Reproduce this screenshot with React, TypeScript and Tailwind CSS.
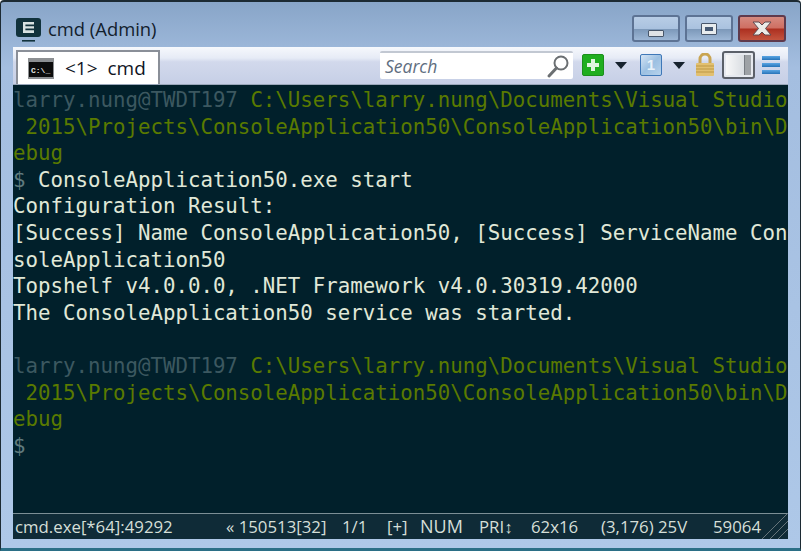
import React from 'react'

const mono = "font-['DejaVu_Sans_Mono','Liberation_Mono',monospace]"

function Host() {
  return <span className="text-[#3c5860]">larry.nung@TWDT197</span>
}

function Green({ children }: { children: React.ReactNode }) {
  return <span className="text-[#5a7a00]">{children}</span>
}

function PromptBlock() {
  return (
    <>
      <div className="h-[26.6px]"><Host /> <Green>C:\Users\larry.nung\Documents\Visual Studio</Green></div>
      <div className="h-[26.6px]"><Green> 2015\Projects\ConsoleApplication50\ConsoleApplication50\bin\D</Green></div>
      <div className="h-[26.6px]"><Green>ebug</Green></div>
    </>
  )
}

function WinButton({ width, red, children }: { width: string; red?: boolean; children: React.ReactNode }) {
  return (
    <div
      className={`${width} h-[27px] flex items-center justify-center rounded-[3px] border-2 ${
        red
          ? 'border-[#5f3a4c] bg-[linear-gradient(#d58a80_0%,#cf6f62_48%,#ac2f20_52%,#c4553f_100%)]'
          : 'border-[#5d7394] bg-[linear-gradient(#b8cde6_0%,#aac2df_50%,#7d99ba_54%,#9db7d6_100%)]'
      }`}
    >
      {children}
    </div>
  )
}

function Arrow() {
  return (
    <svg width="12" height="7" viewBox="0 0 12 7">
      <path d="M0 0h12L6 7z" fill="#16222e" />
    </svg>
  )
}

export default function App() {
  return (
    <div className="w-[801px] h-[551px] flex flex-col overflow-hidden rounded-t-[4px] border border-[#1c2a33] border-t-2 border-b-[3px] border-b-[#2b6f86] bg-[linear-gradient(#88a5c8_0%,#a4bee0_12%,#aec8e8_100%)] px-[12px] font-['Liberation_Sans',sans-serif]">
      {/* Title bar */}
      <div className="h-[45px] shrink-0 flex items-start justify-between">
        <div className="flex items-center pt-[15px] pl-[3px]">
          <svg width="26" height="26" viewBox="0 0 26 26">
            <rect x="0" y="1" width="25" height="19" rx="3" fill="#11323c" />
            <path d="M7 5h11v2.4H9.4v1.8H18v2.2H9.4v1.8H18V16H7z" fill="#d8e2e2" />
            <rect x="6" y="23" width="13" height="1.6" fill="#11323c" />
          </svg>
          <span className="ml-[6px] -mt-[2px] text-[18.400px] font-['Open_Sans',sans-serif] text-[#12202c]">cmd (Admin)</span>
        </div>
        <div className="flex gap-[5px] pt-[13px] pr-[2px]">
          <WinButton width="w-[48px]">
            <div className="w-[16px] h-[7px] mt-[9px] rounded-[1px] border border-[#48566a] bg-[#dfe2e6]" />
          </WinButton>
          <WinButton width="w-[48px]">
            <div className="w-[16px] h-[12px] flex items-center justify-center rounded-[1px] border border-[#48566a] bg-[#e8ecee]">
              <div className="w-[8px] h-[4px] bg-[#475a74]" />
            </div>
          </WinButton>
          <WinButton width="w-[48px]" red>
            <svg width="22" height="15" viewBox="0 0 22 15">
              <path d="M2 1h6l3 3 3-3h6l-5.500 6.500L20 14h-6l-3-3-3 3H2l5.500-6.500z" fill="#ecebe8" stroke="#5e4a50" strokeWidth="1" />
            </svg>
          </WinButton>
        </div>
      </div>

      {/* Tab + toolbar */}
      <div className="h-[38px] shrink-0 flex items-end bg-[linear-gradient(#f6f8fc_0%,#e6ebf6_30%,#d2d9ec_40%,#c6cfe6_100%)] border-b border-[#9aa7ba]">
        <div className="ml-[3px] w-[144px] h-[34px] flex items-center bg-white border-2 border-b-0 border-[#8a8f98] pl-[10px]">
          <svg width="26" height="21" viewBox="0 0 26 21">
            <rect width="26" height="21" fill="#8c8f92" />
            <rect x="1" y="4" width="24" height="15" fill="#0c0c0c" />
            <text x="3" y="15" fontSize="8" fontWeight="700" fill="#e8e8e8" fontFamily="Liberation Mono">C:\_</text>
          </svg>
          <span className="ml-[11px] text-[19px] font-['Open_Sans',sans-serif] text-[#10151f] whitespace-pre">{'<1>  cmd'}</span>
        </div>
        <div className="ml-[220px] mb-[5px] w-[193px] h-[28px] flex items-center justify-between bg-white border-t-2 border-[#c2c8d2] rounded-[2px] pl-[5px] pr-[3px]">
          <span className="italic text-[17.500px] font-['Open_Sans',sans-serif] text-[#5f6e80]">Search</span>
          <svg width="24" height="26" viewBox="0 0 24 26">
            <circle cx="15" cy="10" r="6.500" fill="none" stroke="#6b6f72" strokeWidth="2" />
            <path d="M10.500 15L3 23" stroke="#6b6f72" strokeWidth="3" strokeLinecap="round" />
          </svg>
        </div>
        <div className="flex items-center ml-[9px] mb-[7px] h-[24px]">
          <div className="w-[22px] h-[22px] flex items-center justify-center rounded-[2px] bg-[#1fae1f] border border-[#1b8f1b]">
            <svg width="14" height="14" viewBox="0 0 14 14">
              <path d="M5 1h4v4h4v4H9v4H5V9H1V5h4z" fill="#dff5df" />
            </svg>
          </div>
          <div className="ml-[11px]"><Arrow /></div>
          <div className="ml-[13px] w-[22px] h-[22px] flex items-center justify-center rounded-[2px] border border-[#3f78b8] bg-[linear-gradient(135deg,#d5e4f4_0%,#9cc0e2_50%,#b7d2ec_100%)] text-[15px] font-bold text-[#e8f2fa]">1</div>
          <div className="ml-[11px]"><Arrow /></div>
          <svg className="ml-[10px]" width="20" height="24" viewBox="0 0 20 24">
            <path d="M5 11V6a5 5 0 0 1 10 0v5" fill="none" stroke="#c9a552" strokeWidth="3" />
            <rect x="1" y="10" width="18" height="13" rx="1" fill="#e2c070" />
            <path d="M1 13h18M1 16h18M1 19h18" stroke="#bd9845" strokeWidth="1" />
          </svg>
          <div className="ml-[7px] w-[33px] h-[28px] flex rounded-[3px] border-2 border-[#5b6069] bg-[#e6e9ef] p-[2px]">
            <div className="flex-1 bg-[linear-gradient(90deg,#f8f8f8,#d9dde2)]" />
            <div className="w-[7px] bg-[#9ea2a6] border-l border-[#777c82]" />
          </div>
          <div className="ml-[7px] w-[18px] flex flex-col gap-[3px]">
            <div className="h-[4px] bg-[linear-gradient(#5aa6e4,#2673b8)]" />
            <div className="h-[4px] bg-[linear-gradient(#5aa6e4,#2673b8)]" />
            <div className="h-[4px] bg-[linear-gradient(#5aa6e4,#2673b8)]" />
          </div>
        </div>
      </div>

      {/* Terminal */}
      <div className={`flex-1 min-h-0 bg-[#01202b] text-[#e0e8d8] text-[20.750px] leading-[26.600px] whitespace-pre pt-[2px] overflow-hidden ${mono}`}>
        <PromptBlock />
        <div className="h-[26.6px]"><span className="text-[#5f7a7e]">$</span> ConsoleApplication50.exe start</div>
        <div className="h-[26.6px]">Configuration Result:</div>
        <div className="h-[26.6px]">[Success] Name ConsoleApplication50, [Success] ServiceName Con</div>
        <div className="h-[26.6px]">soleApplication50</div>
        <div className="h-[26.6px]">Topshelf v4.0.0.0, .NET Framework v4.0.30319.42000</div>
        <div className="h-[26.6px]">The ConsoleApplication50 service was started.</div>
        <div className="h-[26.6px]" />
        <PromptBlock />
        <div className="h-[26.6px]"><span className="text-[#5f7a7e]">$</span></div>
      </div>

      {/* Status bar */}
      <div className="h-[26px] shrink-0 mb-[9px] flex items-center relative bg-[#0f2b37] border-t border-[#7c8f96] text-[#d5dfd8] text-[16.800px] font-['Open_Sans',sans-serif] whitespace-pre pl-[2px]">
        <span className="w-[211px]">cmd.exe[*64]:49292</span>
        <span className="w-[116px]">« 150513[32]</span>
        <span className="w-[45px]">1/1</span>
        <span className="w-[33px]">[+]</span>
        <span className="w-[59px] text-[18px]">NUM</span>
        <span className="w-[52px]">PRI↕</span>
        <span className="w-[70px]">62x16</span>
        <span className="w-[112px]">(3,176) 25V</span>
        <span>59064</span>
        <svg className="absolute right-0 bottom-0" width="26" height="26" viewBox="0 0 26 26">
          <path d="M0 26L26 0M8 26L26 8M16 26L26 16" stroke="#66747a" strokeWidth="1" />
        </svg>
      </div>
    </div>
  )
}
